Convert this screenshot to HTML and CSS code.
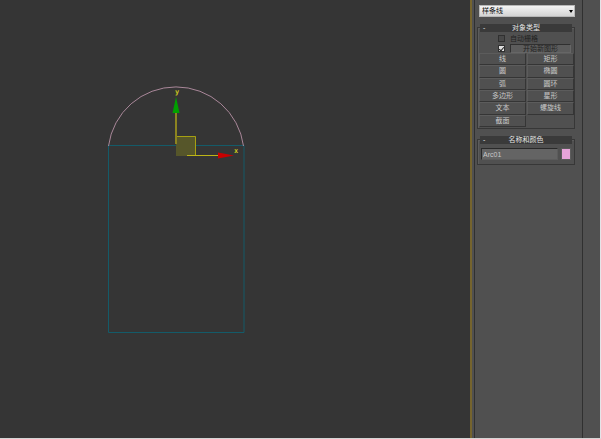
FILE: index.html
```html
<!DOCTYPE html>
<html lang="zh-CN">
<head>
<meta charset="utf-8">
<title>样条线</title>
<link rel="stylesheet" href="styles.css">
</head>
<body>
<div class="app">
  <main class="viewport">
    <svg class="scene" width="470" height="438" viewBox="0 0 470 438">
      <path class="shape-rect" d="M108.5 145.5H244V332.5H108.5Z"/>
      <path class="shape-arc" d="M108.500 146A68.100 68.100 0 0 1 243.500 146"/>
      <rect class="plane" x="176" y="136" width="20" height="20"/>
      <path class="plane-edge" d="M176.500 136.500H195.500V155.500"/>
      <path class="axis" d="M176 112V144"/>
      <path class="axis-x" d="M187 155.500H219"/>
      <path class="tip-y" d="M176 97L179.500 113H172.500Z"/>
      <path class="tip-x" d="M234 155.500L218 152.500V158.500Z"/>
      <text class="axis-label" x="175" y="94">y</text>
      <text class="axis-label" x="234" y="153">x</text>
    </svg>
  </main>
  <aside class="panel">
    <div class="rollouts">
      <div class="picker">
        <select class="category" aria-label="类别"><option>样条线</option></select>
      </div>
      <section class="group">
        <h2 class="title"><span class="minus">-</span>对象类型</h2>
        <div class="options">
          <input class="tick" type="checkbox" id="grid" disabled>
          <label class="off" for="grid">自动栅格</label>
          <input class="tick" type="checkbox" id="start" checked aria-label="开始新图形">
          <button class="start" type="button">开始新图形</button>
        </div>
        <div class="types">
          <button type="button">线</button><button type="button">矩形</button>
          <button type="button">圆</button><button type="button">椭圆</button>
          <button type="button">弧</button><button type="button">圆环</button>
          <button type="button">多边形</button><button type="button">星形</button>
          <button type="button">文本</button><button type="button">螺旋线</button>
          <button type="button">截面</button>
        </div>
      </section>
      <section class="group">
        <h2 class="title"><span class="minus">-</span>名称和颜色</h2>
        <div class="naming">
          <input class="name" type="text" value="Arc01" aria-label="名称">
          <button class="swatch" type="button" aria-label="颜色"></button>
        </div>
      </section>
    </div>
    <div class="gutter"></div>
  </aside>
</div>
</body>
</html>
```
FILE: styles.css
```css
* { box-sizing: border-box; }

body {
  margin: 0;
  background: #d5d5d5;
  font: 7px/8px "Liberation Sans", "Noto Sans CJK SC", sans-serif;
  color: #c8c8c8;
}

button, input, select { font: inherit; color: inherit; margin: 0; padding: 0; }

.app {
  display: flex;
  height: 100vh;
  border-bottom: 1px solid #d5d5d5;
  border-right: 1px solid #e4e4e8;
}

.viewport { flex: 1; min-width: 0; overflow: hidden; background: #353535; }

.scene { display: block; fill: none; }
.shape-rect { stroke: #145b69; }
.shape-arc { stroke: #a98799; }
.plane { fill: #56562a; }
.plane-edge { stroke: #a6a012; }
.axis { stroke: #8c8420; stroke-width: 2; }
.axis-x { stroke: #bdb517; }
.tip-y { fill: #00a000; }
.tip-x { fill: #c80000; }
.axis-label { fill: #c8c020; font: bold 7px "DejaVu Sans Mono", monospace; }

.panel {
  display: flex;
  flex: none;
  width: 130px;
  background: #505050;
  border-left: 2px solid #75642e;
}

.rollouts {
  flex: 1;
  min-width: 0;
  margin-left: 2px;
  padding: 5px 7px 0 2px;
  border-left: 1px solid #303030;
  border-right: 1px solid #303030;
}

.gutter { flex: none; width: 17px; }

.picker { position: relative; margin-left: 2px; }

.category {
  display: block;
  appearance: none;
  width: 100%;
  height: 12px;
  padding-left: 2px;
  border: 1px solid #b8b8b8;
  border-radius: 0;
  background: linear-gradient(#f4f4f4, #d4d4d4);
  color: #111;
}

.picker::after {
  content: "";
  position: absolute;
  right: 2px;
  top: 5px;
  border: 2px solid transparent;
  border-top: 3px solid #000;
  border-bottom: 0;
}

.group {
  margin-top: 10px;
  border: 1px solid #373737;
  box-shadow: inset 1px 1px #5c5c5c;
}

.title {
  position: relative;
  height: 8px;
  margin: -4px 2px 0;
  background: #3a3a3a;
  font-size: 7px;
  font-weight: normal;
  line-height: 8px;
  text-align: center;
  color: #e4e4e4;
}

.minus { position: absolute; left: 3px; }

.options {
  display: grid;
  grid-template-columns: 7px 1fr;
  grid-template-rows: 9px 9px;
  column-gap: 5px;
  row-gap: 1px;
  align-items: center;
  padding: 2px 3px 0 20px;
}

.tick {
  appearance: none;
  width: 7px;
  height: 7px;
  border: 1px solid #303030;
  background: #484848;
}

.tick:checked { background: #e0e0e0; }

.tick:checked::after {
  content: "";
  display: block;
  width: 2px;
  height: 4px;
  margin-left: 1px;
  border: solid #222;
  border-width: 0 1px 1px 0;
  rotate: 40deg;
}

.off { color: #222; }

.start {
  height: 9px;
  border: 1px solid #303030;
  border-right-color: #666;
  border-bottom-color: #666;
  background: #5c5c5c;
  color: #222;
  line-height: 7px;
}

.types {
  display: grid;
  grid-template-columns: 1fr 1fr;
  grid-template-rows: repeat(6, 1fr);
  height: 75px;
  column-gap: 1px;
  padding: 0 0 1px 1px;
}

.types button {
  border: 1px solid #353535;
  border-top-color: #5c5c5c;
  border-left-color: #5c5c5c;
  background: #505050;
}

.naming { display: flex; gap: 3px; padding: 4px 3px; }

.name {
  flex: 1;
  min-width: 0;
  height: 12px;
  padding-left: 1px;
  border: 1px solid #292929;
  border-right-color: #5c5c5c;
  border-bottom-color: #5c5c5c;
  border-radius: 0;
  background: #646464;
}

.swatch {
  width: 10px;
  height: 12px;
  border: 1px solid #5c5c5c;
  background: #e7a3d9;
}
```
